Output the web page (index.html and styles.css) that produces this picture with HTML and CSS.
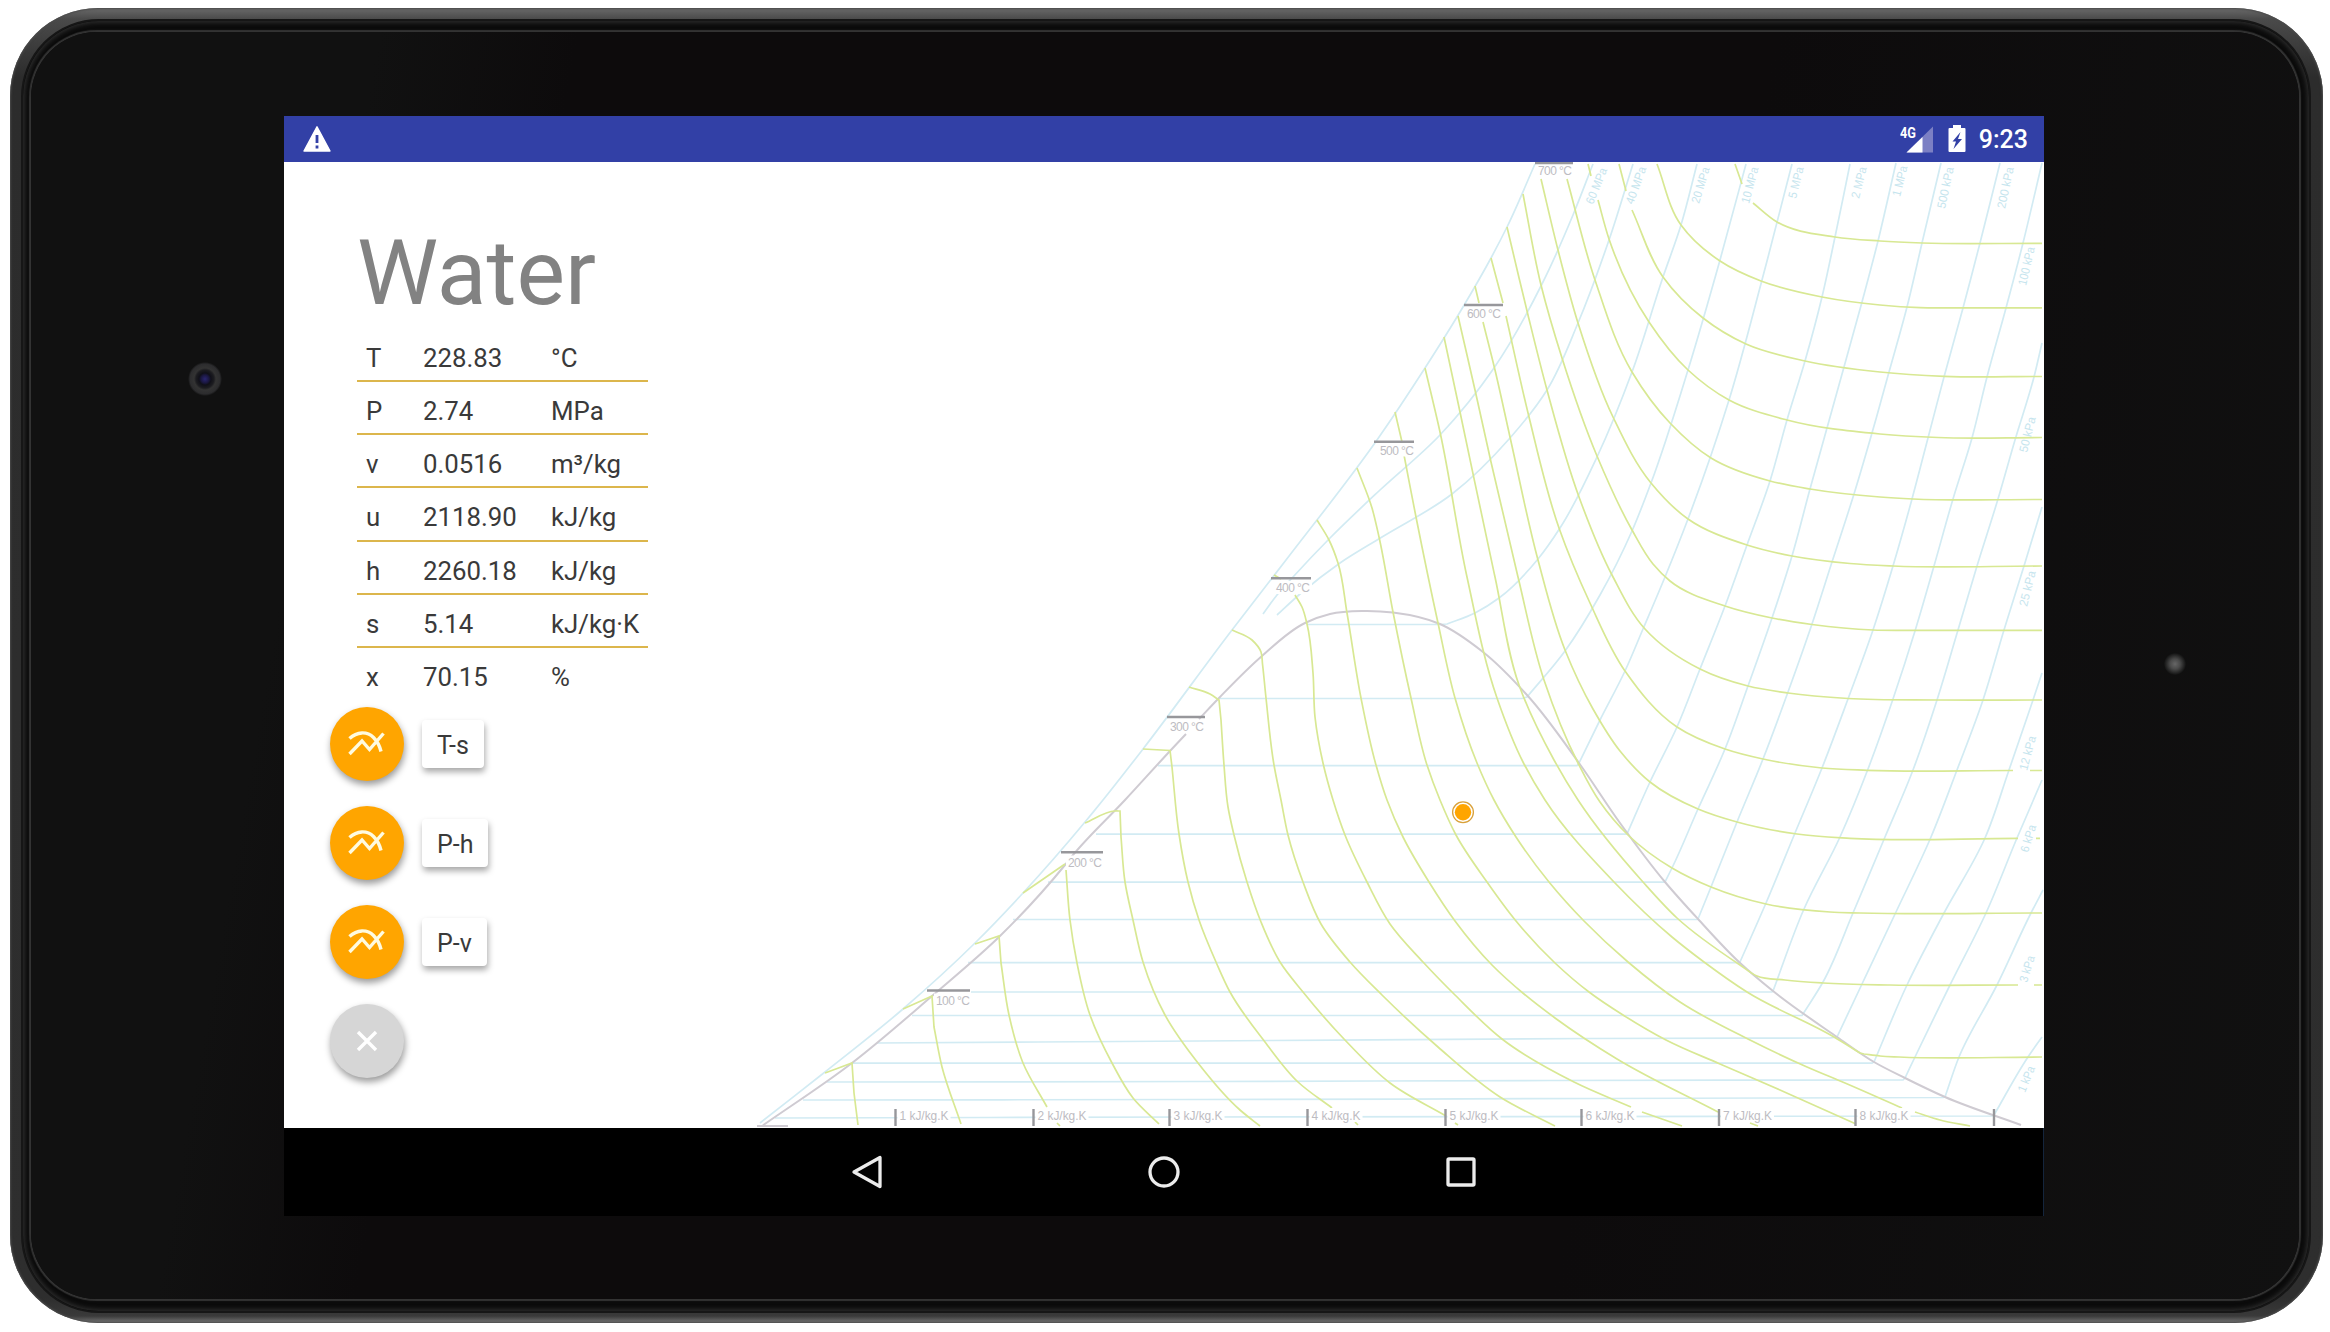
FILE: index.html
```html
<!DOCTYPE html>
<html lang="en">
<head>
<meta charset="utf-8">
<title>Water</title>
<link rel="stylesheet" href="styles.css">
</head>
<body>
<div class="device">
  <div class="rim">
    <div class="glass">
      <div class="bezel bezel-left"><span class="camera"></span></div>
      <div class="screen">
        <header class="status">
          <svg class="warn" width="28" height="26" viewBox="0 0 28 26"><path d="M14 .8 27 25H1z" fill="#fff" stroke="#fff" stroke-width="1.4" stroke-linejoin="round"/><path d="M14 9v8M14 19.5v3" stroke="#3240a6" stroke-width="2.8"/></svg>
          <div class="status-right">
            <svg class="signal" width="34" height="28" viewBox="0 0 34 28"><text class="net" x="0" y="13" textLength="16" lengthAdjust="spacingAndGlyphs">4G</text><path d="M33 1.500V27.500H6.500z" fill="#7c80c4"/><path d="M22.500 12V27.500H6.500z" fill="#fff"/></svg>
            <svg class="battery" width="18" height="28" viewBox="0 0 18 28"><path d="M5 0h8v3h3.500q1 0 1 1v22q0 1-1 1H1.500q-1 0-1-1V4q0-1 1-1H5z" fill="#fff"/><path d="M12.500 7 4.500 16.500H8L5.500 24 14 14H10z" fill="#3240a6"/></svg>
            <span class="clock">9:23</span>
          </div>
        </header>
        <main class="app">
          <svg class="chart" viewBox="284 162 1760 966" width="1760" height="966">
            <g id="isobars" class="isobars"></g>
            <g id="dome" class="dome"></g>
            <g id="enthalpy" class="enthalpy"></g>
            <g id="labels"></g>
            <circle cx="1463" cy="812.300" r="10.400" fill="#fff" stroke="#d9a13a" stroke-width="1.300"/>
            <circle cx="1463" cy="812.300" r="8.200" fill="#ffa500"/>
          </svg>
          <section class="panel">
            <h1 class="title">Water</h1>
            <div class="props">
              <div class="row"><span>T</span><span>228.83</span><span>°C</span></div>
              <div class="row"><span>P</span><span>2.74</span><span>MPa</span></div>
              <div class="row"><span>v</span><span>0.0516</span><span>m³/kg</span></div>
              <div class="row"><span>u</span><span>2118.90</span><span>kJ/kg</span></div>
              <div class="row"><span>h</span><span>2260.18</span><span>kJ/kg</span></div>
              <div class="row"><span>s</span><span>5.14</span><span>kJ/kg·K</span></div>
              <div class="row"><span>x</span><span>70.15</span><span>%</span></div>
            </div>
            <div class="fabs">
              <div class="fab-row"><span class="fab"><svg width="40" height="30" viewBox="0 0 40 30"><path d="M2.500 9.500C10 2.500 20 2 26.500 8.500Q32 14 34 22.500M2.500 25 15 12 22.500 20.500 36.500 4.500"/></svg></span><span class="fab-label">T-s</span></div>
              <div class="fab-row"><span class="fab"><svg width="40" height="30" viewBox="0 0 40 30"><path d="M2.500 9.500C10 2.500 20 2 26.500 8.500Q32 14 34 22.500M2.500 25 15 12 22.500 20.500 36.500 4.500"/></svg></span><span class="fab-label">P-h</span></div>
              <div class="fab-row"><span class="fab"><svg width="40" height="30" viewBox="0 0 40 30"><path d="M2.500 9.500C10 2.500 20 2 26.500 8.500Q32 14 34 22.500M2.500 25 15 12 22.500 20.500 36.500 4.500"/></svg></span><span class="fab-label">P-v</span></div>
              <div class="fab-row"><span class="fab fab-close"><svg width="22" height="22" viewBox="0 0 22 22"><path d="M2 2 20 20M20 2 2 20"/></svg></span></div>
            </div>
          </section>
        </main>
        <nav class="nav">
          <svg width="34" height="36" viewBox="0 0 34 36"><path d="M4 18 30 3.500V32.500z"/></svg>
          <svg width="34" height="36" viewBox="0 0 34 36"><circle cx="17" cy="18" r="14"/></svg>
          <svg width="34" height="36" viewBox="0 0 34 36"><rect x="4" y="5" width="26" height="26" rx="1"/></svg>
        </nav>
      </div>
      <div class="bezel bezel-right"><span class="sensor"></span></div>
    </div>
  </div>
</div>
<script src="chart.js"></script>
</body>
</html>
```
FILE: styles.css
```css
* { box-sizing: border-box; }

body {
  margin: 0;
  width: 2330px;
  height: 1332px;
  overflow: hidden;
  background: #fff;
  font-family: Roboto, "Liberation Sans", sans-serif;
}

.device {
  width: 2313px;
  height: 1315px;
  margin: 8px 0 0 10px;
  padding: 11px 12px 10px 11px;
  border-radius: 88px;
  background: linear-gradient(#6a6a6a 0, #4a4a4a 11px, #2c2c2c 70px, #2e2e2e 1290px, #3a3a3a 1308px, #777 1315px);
  box-shadow: inset 0 0 2px 1px #4a4a4a;
}

.rim {
  height: 100%;
  padding: 11px 10px 12px 8px;
  border: 2px solid #161616;
  border-radius: 78px;
  background: #0b0b0b;
  box-shadow: inset 0 0 4px 2px #2b2b2b;
}

.glass {
  display: flex;
  height: 100%;
  padding-top: 84px;
  border-radius: 66px;
  background: linear-gradient(100deg, #111 0, #111 14%, #0d0b0c 22%, #0d0b0c 70%, #111 100%);
  box-shadow: 0 0 1px 1.500px #333;
}

.bezel { display: flex; flex: none; width: 253px; }
.bezel-left { padding: 245px 0 0 157px; }
.bezel-right { padding: 537px 0 0 120px; }

.camera {
  width: 34px;
  height: 36px;
  border-radius: 50%;
  background: radial-gradient(circle, #2a2570 0, #1a1740 4px, #101018 6px, #1c1c20 9px, #333 11px, #2c2c2e 15px, #111 17px);
}

.sensor {
  width: 22px;
  height: 22px;
  border-radius: 50%;
  background: radial-gradient(circle, #666 0, #4a4a4a 5px, #111 11px);
}

.screen {
  display: flex;
  flex: none;
  flex-direction: column;
  width: 1760px;
  height: 1100px;
  background: #fff;
}

.status {
  display: flex;
  flex: none;
  align-items: center;
  justify-content: space-between;
  height: 46px;
  padding: 0 16px 0 19px;
  background: #3240a6;
}

.status-right { display: flex; align-items: center; }
.net { fill: #fff; font-size: 15px; font-weight: 700; }
.battery { margin: 0 13px 0 14px; }

.clock {
  padding-top: 2px;
  color: #fff;
  font-size: 25px;
  font-weight: 500;
  line-height: 44px;
}

.app { display: grid; flex: none; height: 966px; }
.chart, .panel { grid-area: 1 / 1; }
.chart { display: block; }

.panel { width: 420px; padding: 57px 0 0 46px; }

.title {
  margin: 0 0 0 27px;
  color: #828282;
  font-size: 91.500px;
  font-weight: 400;
  line-height: 108px;
}

.props { width: 291px; margin: 2px 0 0 27px; }

.row {
  display: grid;
  grid-template-columns: 57px 128px auto;
  height: 53.150px;
  padding: 14px 0 0 9px;
  border-bottom: 2px solid #dcb64c;
  color: #3a3a3a;
  font-size: 25.800px;
  line-height: 30px;
  white-space: nowrap;
}
.row:last-child { border-bottom: 0; }

.fabs { display: flex; flex-direction: column; gap: 25px; margin-top: 6px; }
.fab-row { display: flex; align-items: center; gap: 18px; height: 74px; }

.fab {
  display: flex;
  align-items: center;
  justify-content: center;
  width: 74px;
  height: 74px;
  border-radius: 50%;
  background: #ffa500;
  box-shadow: 1px 4px 7px rgba(0, 0, 0, .4);
}
.fab svg { fill: none; stroke: #fffbe0; stroke-width: 3.400; }
.fab-close { background: #d6d6d6; }
.fab-close svg { stroke: #fff; }

.fab-label {
  height: 48px;
  padding: 0 15px;
  border-radius: 4px;
  background: #fff;
  box-shadow: 1px 4px 6px rgba(0, 0, 0, .34);
  color: #3a3a3a;
  font-size: 25px;
  line-height: 51px;
}

.nav {
  display: grid;
  grid-template-columns: repeat(3, 297px);
  flex: 1;
  align-items: center;
  justify-content: center;
  justify-items: center;
  border-right: 1px solid #14253c;
  background: #000;
}
.nav svg { fill: none; stroke: #ececec; stroke-width: 3.300; stroke-linejoin: round; }

.isobars, .dome, .enthalpy { fill: none; stroke-width: 1.700; }
.isobars { stroke: #d2ebf3; }
.dome { stroke: #cfcbd2; stroke-width: 2; }
.enthalpy { stroke: #d8e893; }

.tick { stroke: #97979b; stroke-width: 2.400; }
.axis-label { fill: #bdbcc2; font: 12px "Liberation Sans", sans-serif; }
.pressure-label { fill: #c6e5ee; font: 12px "Liberation Sans", sans-serif; }
.label-gap { fill: #fff; }
```
FILE: chart.js
```js
// T-s diagram of water. Each curve is a list of "x,y" points joined smoothly;
// "/" lifts the pen, "|" makes a sharp corner at the next point.
const isobars = [
  "760,1123 825,1072 903,1009 975,943 1023,893 1085,822 1103,800 1143,749 1232,630 1286,560 1377,440 1425,368 1463,307 1491,258 1507,227 1535,164",
  "1593,164 1573,215 1542,284 1494,368 1440,435 1380,490 1330,538 1293,577 1277,595 1263,614",
  "1633,164 1609,240 1578,323 1547,390 1510,438 1452,494 1382,537 1340,563 1300,594 1277,615",
  "1697,164 1681,225 1663,277 1632,372 1597,457 1560,528 1538,559 1499,598 1475,613 1447,624 | 1440,624.5 1307,624.5",
  "1746,164 1720,260 1688,370 1651,483 1632,531 1600,595 1565,651 1527,697 | 1522,698.5 1220,698.5",
  "1792,164 1762,280 1729,400 1688,519 1665,577 1643,629 1625,671 1600,720 1579,763 | 1577,765.7 1158,765.7",
  "1850,164 1835,237 1822,297 1805,361 1787,420 1770,481 1747,545 1725,606 1700,669 1677,727 1650,782 1627,834 | 1626,834.2 1096,834.2",
  "1896,163 1878,241 1862,302 1844,367 1827,428 1810,489 1792,556 1772,618 1748,686 1725,749 1698,809 1672,868 1665,882 | 1664,882.2 1048,882.2",
  "1941,163 1922,243 1907,307 1889,372 1872,433 1854,494 1832,562 1812,624 1788,692 1763,759 1737,822 1711,887 1698,919 | 1697,919.5 1013,919.5",
  "2000,163 1980,243 1963,308 1944,377 1928,438 1912,499 1893,566 1873,630 1848,699 1822,768 1795,833 1766,903 1740,962 | 1739,962.7 968,962.7",
  "2042,163 2023,243 2006,308 1987,377 1972,438 1953,499 1934,566 1915,631 1893,699 1868,769 1840,837 1804,909 1773,991 | 1772,992 971,992",
  "2042,343 2034,377 2015,440 1998,499 1977,566 1958,630 1937,700 1913,770 1885,837 1853,913 1823,982 1803,1014 | 1802,1015.5 912,1015.5",
  "2042,507 2024,566 2004,630 1983,700 1957,770 1931,837 1896,912 1862,984 1837,1037 | 1830,1038 1590,1038.5 1200,1041 877,1043",
  "2042,673 2033,700 2009,770 1985,838 1944,913 1907,985 1874,1062 | 1872,1063.2 852,1063.2",
  "2042,780 2017,838 1986,913 1950,985 1915,1057 1905,1078 | 1903,1080 1550,1080.5 1200,1081.5 827,1082",
  "2043,890 2031,913 1997,985 1959,1057 1945,1097 | 1943,1097.500 1600,1098.5 1200,1099.5 803,1100",
  "2042,1037 2028,1057 1994,1115 | 1992,1116 1200,1117 775,1118"
];

const dome = [
  "762,1126 852,1063 932,996 1000,936 1065,865 1073,855 1125,800 1170,751 1186,734",
  "1199,719 1219,698 1262,656 1305,623 1330,614 1362,611 1393,612.5 1440,624 1483,652 1527,695 1579,763 1620,823 1665,882 1698,919 1739,962 1773,991 1837,1037 1874,1062 1905,1078 1945,1097 2021,1125"
];

const enthalpy = [
  "1735,164 1742,184 / 1753,203 1777,222 1835,237 1880,241 1922,243 2042,243.3",
  "1657,164 1681,225 1720,261 1761,281 1822,297 1880,305 1920,307.7 1963,307.8 2042,307.8",
  "1619,164 1626,191 / 1632,210 1663,277 1703,318 1746,344 1805,361 1880,372 1944,376.300 2042,376.500",
  "1588,164 1591,176 / 1598,200 1609,239 1649,322 1688,370 1729,400 1787,420 1880,434 1938,437.5 2042,437.5",
  "1567,179 1595,280 1632,372 1670,423 1711,458 1770,481 1810,489 1880,497 1913,499 2042,499.5",
  "1541,179 1558,250 1578,323 1613,417 1651,483 1688,519 1747,545 1792,556 1850,563.5 1893,566 2042,566",
  "1523,194 1541,285 1562,358 1597,456 1632,530 1653,564 1670,581 1725,606 1772,618 1812,624.500 1873,630 1915,630.3 2042,630.3",
  "1507,227 1528,315 1547,390 1579,497 1612,575 1645,629 1700,669 1748,686 1788,693 1848,698.500 1937,700 2042,700",
  "1491,258 1503,303 / 1506,316 1529,417 1559,528 1590,603 1625,671 1677,727 1725,749 1763,759 1822,768 1867,770.300 2013,770.5 / 2030,770.5 2042,770.5",
  "1475,286 1479,303 / 1483,322 1495,370 1510,437 1538,560 1565,650 1593,709 1620,751 1650,782 1698,809 1737,822 1797,834 1850,838.3 2018,838.3 / 2036,838.3 2040,838.3",
  "1458,316 1475,390 1491,462 1518,577 1544,680 1578,763 1600,802 1628,835 1672,868 1711,887 1766,904 1830,912 1860,913 2042,913",
  "1444,337 1460,412 1495,577 1519,685 1554,760 1578,800 1643,882 1677,918 1740,965 1757,976 1785,980 1823,983 1890,985 2018,985 / 2034,985 2042,985",
  "1425,368 1440,432 1467,577 1497,698 1523,762 1545,800 1614,882 1672,937 1704,962 1747,992 1834,1037 1860,1053 | 1864,1054 1880,1056 1899,1057 2042,1057",
  "1395,412 1402,442 / 1404,455 1416,517 1438,623 1455,698 1477,763 1494,800 1516,837 1549,882 1584,921 1628,962 1680,1002 1750,1040 1807,1067 1845,1083 1902,1108 / 1915,1112 1940,1120 1970,1126",
  "1357,468 1372,508 1379,537 1393,612 1411,698 1427,765 1440,800 1456,835 1487,882 1516,921 1555,963 1589,992 1623,1015 1666,1040 1720,1064 1780,1090 1856,1124",
  "1317,520 1329,540 1338,563 1347,613 1361,698 1376,765 1387,800 1403,837 1429,882 1455,921 1492,965 1524,994 1555,1018 1617,1059 1718,1112 / 1750,1123 1758,1126",
  "1274,575 1281,579 / 1295,595 1302,607 1307,624 1313,673 1315,717 1323,763 1333,800 1345,835 1367,882 1390,924 1423,962 1455,995 1502,1039 1574,1082 1631,1107 / 1642,1112 1682,1126",
  "1232,630 1252,640 1261,652 1262.500,664 1266,698 1274,765 1281,800 1288,835 1303,882 1321,924 1350,962 1382,995 1438,1047 1500,1097 1555,1126",
  "1189,687 1210,694 1219,700 | 1221,720 1224,765 1228,807 1234,835 1247,882 1261,922 1280,962 1303,992 1344,1039 1390,1083 1446,1116 / 1455,1123 1458,1125",
  "1143,749 1170,750.500 | 1172,767 1179,834 1188,882 1199,920 1216,962 1230,992 1265,1042 1298,1082 1332,1108 / 1355,1122 1358,1125",
  "1085,823 1115,811 1120,811 | 1121,837 1125,882 1133,920 1143,962 1165,1015 1198,1063 1240,1110 1260,1126",
  "1023,893 1065,864 / 1066,870 1070,920 1077,963 1090,1015 1112,1063 1133,1098 1159,1124",
  "975,944 999,936 | 1001,963 1009,1015 1023,1063 1047,1107 / 1057,1123 1060,1126",
  "903,1009 932,996 | 934,1027 942,1067 961,1124",
  "825,1073 852,1063 | 854,1093 858,1125"
];

const temperatures = [
  // label, tick left, tick right, tick y, text x, baseline
  ["700 °C", 1535, 1573, 163, 1538, 175],
  ["600 °C", 1464, 1503, 305, 1467, 317.500],
  ["500 °C", 1374, 1414, 441.700, 1380, 454.500],
  ["400 °C", 1271, 1311, 578.300, 1276, 592],
  ["300 °C", 1167, 1205, 717, 1170, 731],
  ["200 °C", 1061, 1103, 852.300, 1068, 866.500],
  ["100 °C", 927, 970, 990.500, 936, 1004.500]
];

const entropies = [895.500, 1033.500, 1169.500, 1307.500, 1445.500, 1581.500, 1719, 1855.500, 1994];

const pressures = [
  ["60 MPa", 1593, 205, -68, 38], ["40 MPa", 1633, 205, -70, 39], ["20 MPa", 1699, 204, -73, 37],
  ["10 MPa", 1749, 204, -75, 37], ["5 MPa", 1796, 199, -76, 32], ["2 MPa", 1859, 199, -76, 32],
  ["1 MPa", 1900, 197, -76, 31], ["500 kPa", 1945, 209, -78, 42], ["200 kPa", 2005, 209, -78, 42],
  ["100 kPa", 2026, 286, -77, 39], ["50 kPa", 2027, 453, -76, 36], ["25 kPa", 2027, 607, -76, 36],
  ["12 kPa", 2027, 771, -75, 35], ["6 kPa", 2028, 853, -73, 28], ["3 kPa", 2027, 983, -73, 27],
  ["1 kPa", 2025, 1093, -68, 27]
];

function segment(p) {
  let d = "";
  for (let i = 0; i < p.length - 1; i++) {
    const a = p[i - 1] || p[i], b = p[i], c = p[i + 1], e = p[i + 2] || c;
    const [t1, t2] = [tangent(a, b, c), tangent(b, c, e)];
    const len = Math.hypot(c[0] - b[0], c[1] - b[1]) / 3;
    d += "C" + [b[0] + t1[0] * len, b[1] + t1[1] * len,
      c[0] - t2[0] * len, c[1] - t2[1] * len, c[0], c[1]]
      .map(n => n.toFixed(2)).join(" ");
  }
  return d;
}

// Unit direction at b: the two adjoining chords, the shorter one weighing more.
function tangent(a, b, c) {
  const l1 = Math.hypot(b[0] - a[0], b[1] - a[1]);
  const l2 = Math.hypot(c[0] - b[0], c[1] - b[1]);
  const w1 = l1 ? l2 / l1 : 0, w2 = l2 ? l1 / l2 : 0;
  let x = (b[0] - a[0]) * w1 + (c[0] - b[0]) * w2;
  let y = (b[1] - a[1]) * w1 + (c[1] - b[1]) * w2;
  if (!l1 || !l2) { x = c[0] - a[0]; y = c[1] - a[1]; }
  const n = Math.hypot(x, y) || 1;
  return [x / n, y / n];
}

function curve(text) {
  return text.split("/").map(stroke => {
    const runs = stroke.split("|").map(r => r.trim().split(/\s+/).map(s => s.split(",").map(Number)));
    let d = "M" + runs[0][0].join(" ");
    runs.forEach((run, i) => {
      if (i) d += "L" + run[0].join(" ");
      d += segment(run);
    });
    return d;
  }).join("");
}

function draw(id, curves) {
  document.getElementById(id).innerHTML = curves.map(c => `<path d="${curve(c)}"/>`).join("");
}

draw("isobars", isobars);
draw("dome", dome);
draw("enthalpy", enthalpy);

let labels = "";
for (const [name, x1, x2, y, tx, ty] of temperatures) {
  labels += `<rect class="label-gap" x="${tx - 2}" y="${ty - 11}" width="38" height="13"/>`;
  labels += `<path class="tick" d="M${x1} ${y}H${x2}"/>`;
  labels += `<text class="axis-label" x="${tx}" y="${ty}" textLength="34">${name}</text>`;
}
labels += `<path class="dome" d="M757 1126H788"/>`;
entropies.forEach((x, i) => {
  if (i < 8) {
    labels += `<rect class="label-gap" x="${x + 2}" y="1108" width="53" height="14"/>`;
    labels += `<text class="axis-label" x="${x + 4}" y="1119.500" textLength="49" lengthAdjust="spacingAndGlyphs">${i + 1} kJ/kg.K</text>`;
  }
  labels += `<path class="tick" d="M${x} 1109V1126"/>`;
});
for (const [name, x, y, angle, len] of pressures) {
  labels += `<g transform="translate(${x} ${y}) rotate(${angle})">` +
    `<text class="pressure-label" textLength="${len}" lengthAdjust="spacingAndGlyphs">${name}</text></g>`;
}
document.getElementById("labels").innerHTML = labels;
```
